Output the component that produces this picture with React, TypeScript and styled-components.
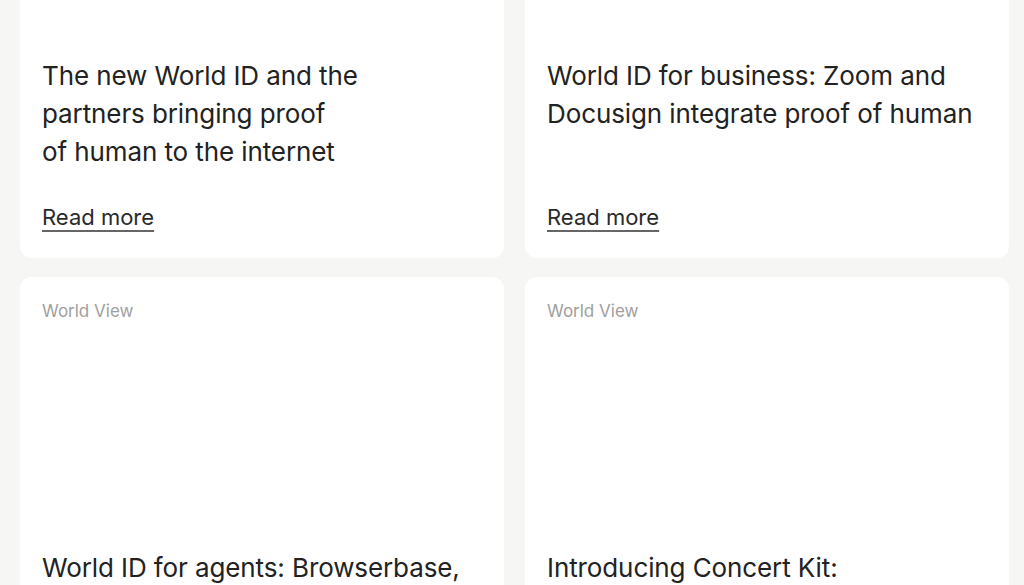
import React from 'react'
import styled, { createGlobalStyle } from 'styled-components'

type Post = {
  label?: string
  title: React.ReactNode
  readMore?: boolean
}

const posts: Post[] = [
  {
    label: 'World View',
    title: (
      <>
        The new World ID and the
        <br />
        partners bringing proof
        <br />
        of human to the internet
      </>
    ),
    readMore: true,
  },
  {
    label: 'World View',
    title: 'World ID for business: Zoom and Docusign integrate proof of human',
    readMore: true,
  },
  {
    label: 'World View',
    title: 'World ID for agents: Browserbase, Vercel and more bring proof of human to AI',
    readMore: true,
  },
  {
    label: 'World View',
    title: (
      <>
        Introducing Concert Kit:
        <br />
        proof of human for fair ticketing
      </>
    ),
    readMore: true,
  },
]

const App = () => {
  return (
    <>
      <GlobalStyle />
      <Page>
        <Grid>
          {posts.map((post, i) => (
            <Card key={i}>
              <Label>{post.label}</Label>
              <Media />
              <Title>{post.title}</Title>
              {post.readMore && <ReadMore href="#">Read more</ReadMore>}
            </Card>
          ))}
        </Grid>
      </Page>
    </>
  )
}

const GlobalStyle = createGlobalStyle`
  html, body {
    margin: 0;
    padding: 0;
    background: #f6f6f5;
    overflow: hidden;
  }
  body {
    font-family: Inter, "Liberation Sans", Arial, sans-serif;
    color: #1c1c1c;
  }
`

const Page = styled.div`
  height: 585px;
  overflow: hidden;
  padding: 0 15px 0 20px;
`

const Grid = styled.div`
  display: grid;
  grid-template-columns: 1fr 1fr;
  column-gap: 21px;
  row-gap: 19px;
  margin-top: -215px;
`

const Card = styled.article`
  display: flex;
  flex-direction: column;
  background: #ffffff;
  border-radius: 12px;
  padding: 23px 22px 27px;
  min-height: 473px;
  box-sizing: border-box;
`

const Label = styled.div`
  font-size: 17px;
  line-height: 22px;
  color: #a0a0a0;
`

const Media = styled.div`
  height: 227px;
`

const Title = styled.h3`
  margin: 0;
  font-size: 26px;
  line-height: 38px;
  font-weight: 400;
  letter-spacing: -0.1px;
  color: #222222;
  flex-grow: 1;
`

const ReadMore = styled.a`
  align-self: flex-start;
  margin-top: 32px;
  font-size: 22px;
  line-height: 28px;
  color: #2a2a2a;
  text-decoration: underline;
  text-decoration-color: #666;
  text-underline-offset: 5px;
`

export default App
